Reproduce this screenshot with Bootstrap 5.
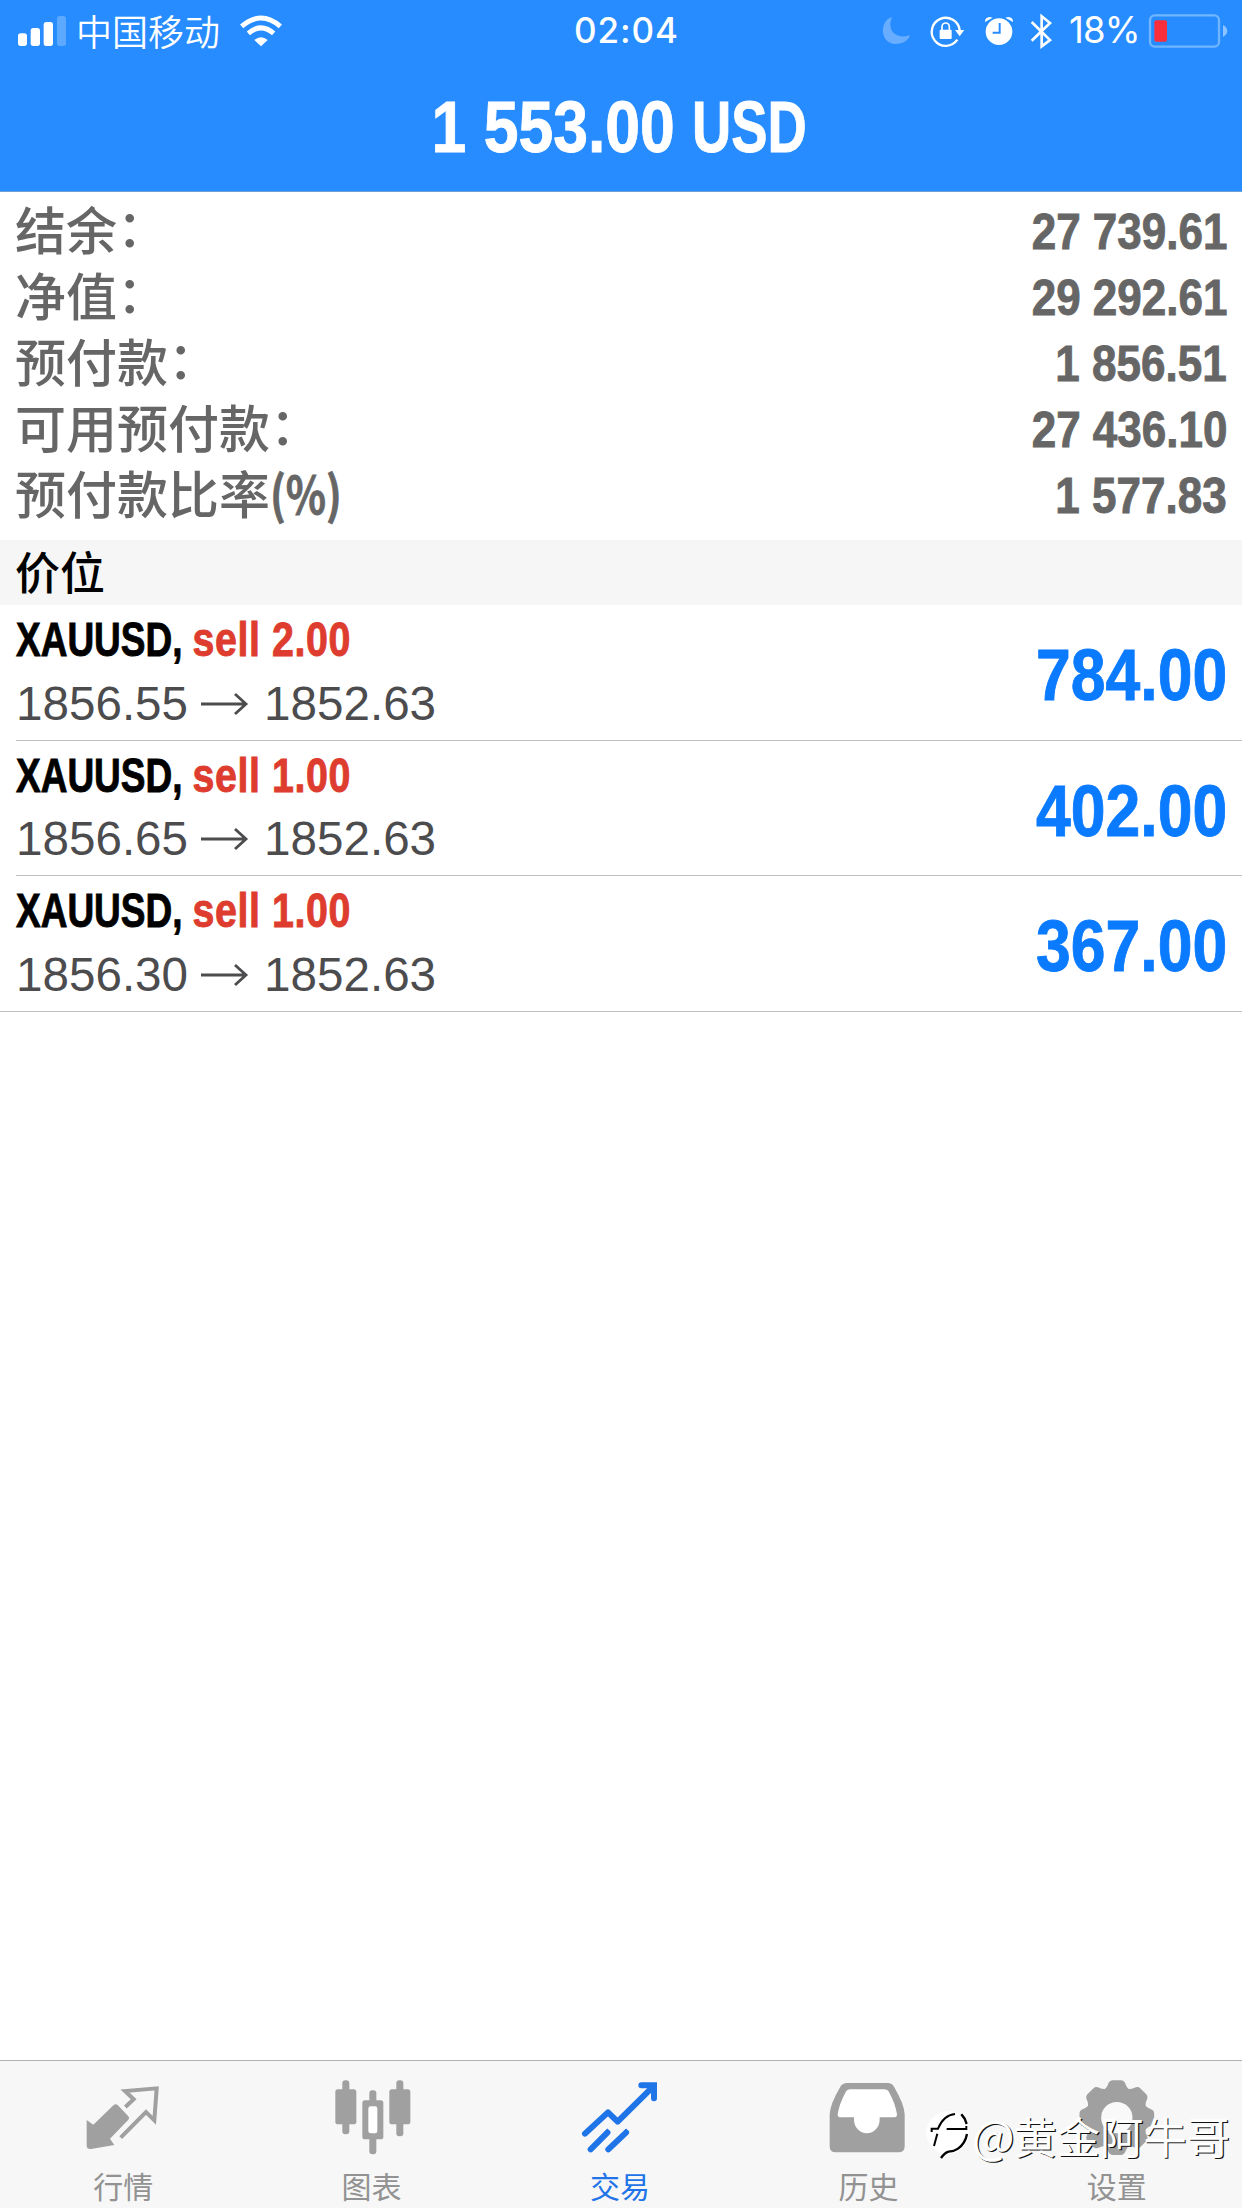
<!DOCTYPE html>
<html lang="zh-CN">
<head>
<meta charset="utf-8">
<meta name="viewport" content="width=device-width, initial-scale=1">
<title>交易</title>
<link rel="stylesheet" href="https://cdn.jsdelivr.net/npm/bootstrap@5.3.0/dist/css/bootstrap.min.css">
<style>
  body { font-family: "Liberation Sans", "Noto Sans CJK SC", sans-serif; background: #fff; }
  .screen { width: 1242px; height: 2208px; }
  svg { display: block; flex: none; }

  .topbar { height: 192px; background: #268cff; border-bottom: 1px solid #6f9fd8; }
  .status { height: 61px; padding: 0 13px 0 16px; font-size: 36px; line-height: 61px; }
  .status > div { flex: 1 1 0; }
  .carrier { font-family: "Noto Sans CJK SC", sans-serif; font-weight: 350; margin-left: 8px; width: 162px; line-height: 59px; }
  .clock { font-family: Inter, sans-serif; font-weight: 500; font-size: 35px; letter-spacing: .9px; padding-left: 8px; }
  .charge { font-family: Inter, sans-serif; font-size: 36.5px; width: 78px; margin-left: 15px; letter-spacing: -.9px; }
  .equity { font-size: 72px; line-height: 82px; padding: 25px 3px 0 0; }

  .cond { display: inline-block; font-weight: 700; white-space: pre; transform: scaleX(.868); -webkit-text-stroke: .9px currentColor; }
  .cond-end { transform-origin: 100% 50%; }
  .cond-start { transform-origin: 0 50%; transform: scaleX(.82); }
  .currency { display: inline-block; transform: scaleX(.87); transform-origin: 0 50%; margin-right: -20px; }

  .summary { padding: 3px 15px 15px 15px; color: #666; }
  .summary-line { height: 66px; line-height: 66px; }
  .summary-label { font-family: "Noto Sans CJK SC", sans-serif; font-size: 51px; font-weight: 500; }
  .colon { vertical-align: 3px; line-height: 1; }
  .percent { display: inline-block; transform: scaleX(.82); transform-origin: 0 50%; font-weight: 600; -webkit-text-stroke: .8px currentColor; }
  .summary-value { font-size: 50px; padding-top: 4px; transform: scaleX(.88); }

  .section-title { height: 65px; line-height: 62px; padding-left: 15px; background: #f6f6f6; color: #000;
    font-family: "Noto Sans CJK SC", sans-serif; font-size: 45px; font-weight: 500; }

  .deal { height: 135.5px; margin-left: 16px; padding: 4px 15px 0 0; border-bottom: 1px solid #bfbfc2; }
  .deal:last-child { margin-left: 0; padding-left: 16px; }
  .deal-title, .deal-price { height: 63px; line-height: 62px; font-size: 48px; }
  .symbol { display: inline-block; color: #000; transform: scaleX(.94); transform-origin: 0 50%; margin-right: -14px; }
  .side { color: #de3c2e; letter-spacing: .7px; }
  .deal-price { color: #4c4c4e; font-size: 47.6px; }
  .profit { color: #0a7aff; font-size: 72px; line-height: 132px; }

  .tabs { height: 148px; background: #f7f7f7; border-top: 1px solid #b2b2b2; }
  .tab { flex: 1 1 0; padding-top: 16px; color: #929292; }
  .tab.current { color: #1f74e8; }
  .tab-label { font-family: "Noto Sans CJK SC", sans-serif; font-size: 30px; line-height: 44px; margin: 6px 2px 0 0; }

  .signature { right: 12px; bottom: 45px; height: 56px; line-height: 56px; font-size: 43.3px; color: #fff;
    font-family: "Noto Sans CJK SC", sans-serif; font-weight: 400; white-space: nowrap; text-shadow: 1.2px 1px 0 #111; }
  .at-sign { font-size: 45px; margin-right: -1px; }
</style>
<script src="https://cdn.jsdelivr.net/npm/bootstrap@5.3.0/dist/js/bootstrap.bundle.min.js"></script>
</head>
<body>
<div class="screen position-relative d-flex flex-column overflow-hidden">
  <header class="topbar text-white">
    <div class="status d-flex">
      <div class="d-flex align-items-center">
        <svg width="52" height="36" viewBox="48 36 156 108" fill="#fff"><rect x="54" y="97" width="27" height="38" rx="8"/><rect x="92" y="81" width="28" height="54" rx="8"/><rect x="131" y="63" width="28" height="72" rx="8"/><rect x="171" y="45" width="27" height="90" rx="8" opacity=".25"/></svg>
        <span class="carrier">中国移动</span>
        <svg width="46" height="36" viewBox="714 36 138 108" fill="none" stroke="#fff" stroke-width="15"><path d="M725 76Q783 26 841 76M745 97Q783 64 821 97"/><path d="M763 117Q783 100 803 117L783 136Z" fill="#fff" stroke="none"/></svg>
      </div>
      <span class="clock">02:04</span>
      <div class="d-flex align-items-center justify-content-end">
        <svg width="32" height="36" viewBox="114 36 96 108"><path d="M147 48C108 60 110 128 158 129C181 129 196 118 201 103C160 116 130 90 147 48Z" fill="#68adff"/></svg>
        <svg class="ms-3" width="37" height="36" viewBox="255 36 111 108" fill="none" stroke="#fff"><path d="M340 116A42 42 0 1 1 347 88" stroke-width="7"/><path d="M333 87H361L347 106Z" fill="#fff" stroke="none"/><rect x="287" y="86" width="36" height="28" rx="3" fill="#fff" stroke="none"/><path d="M294 88V77A11 11 0 0 1 316 77V88" stroke-width="5"/></svg>
        <svg width="49" height="36" viewBox="366 36 147 108"><circle cx="465" cy="92" r="40" fill="#fff"/><path d="M423 63Q422 49 437 48L446 50ZM507 63Q508 49 493 48L484 50Z" fill="#fff"/><path d="M467 66V95H446" fill="none" stroke="#268cff" stroke-width="6"/></svg>
        <svg width="39" height="36" viewBox="513 36 117 108" fill="none" stroke="#fff" stroke-width="8"><path d="M563 63L618 117L593 136V46L618 66L563 119"/></svg>
        <span class="charge">18%</span>
        <svg width="82" height="36" viewBox="915 36 246 108"><rect x="924" y="43" width="207" height="94" rx="14" fill="none" stroke="#72b5ff" stroke-width="7"/><path d="M1143 72Q1156 80 1156 90T1143 108Z" fill="#8dc3ff"/><rect x="937" y="58" width="38" height="64" rx="6" fill="#fb2f3c"/></svg>
      </div>
    </div>
    <div class="equity text-center"><span class="cond">1 553.00 <span class="currency">USD</span></span></div>
  </header>

  <main class="flex-grow-1">
    <section class="summary">
      <div class="summary-line d-flex justify-content-between"><span class="summary-label">结余<span class="colon">：</span></span><span class="summary-value cond cond-end">27 739.61</span></div>
      <div class="summary-line d-flex justify-content-between"><span class="summary-label">净值<span class="colon">：</span></span><span class="summary-value cond cond-end">29 292.61</span></div>
      <div class="summary-line d-flex justify-content-between"><span class="summary-label">预付款<span class="colon">：</span></span><span class="summary-value cond cond-end">1 856.51</span></div>
      <div class="summary-line d-flex justify-content-between"><span class="summary-label">可用预付款<span class="colon">：</span></span><span class="summary-value cond cond-end">27 436.10</span></div>
      <div class="summary-line d-flex justify-content-between"><span class="summary-label">预付款比率<span class="percent">(%)</span></span><span class="summary-value cond cond-end">1 577.83</span></div>
    </section>
    <div class="section-title">价位</div>
    <section>
      <div class="deal d-flex justify-content-between">
        <div>
          <div class="deal-title"><span class="cond cond-start"><span class="symbol">XAUUSD,</span> <span class="side">sell 2.00</span></span></div>
          <div class="deal-price d-flex align-items-center"><span>1856.55</span><svg class="ms-2 me-2" width="60" height="24" viewBox="0 0 60 24" fill="none" stroke="currentColor" stroke-width="2.8"><path d="M5 12H50M39 2L50 12L39 22"/></svg><span>1852.63</span></div>
        </div>
        <span class="profit cond cond-end">784.00</span>
      </div>
      <div class="deal d-flex justify-content-between">
        <div>
          <div class="deal-title"><span class="cond cond-start"><span class="symbol">XAUUSD,</span> <span class="side">sell 1.00</span></span></div>
          <div class="deal-price d-flex align-items-center"><span>1856.65</span><svg class="ms-2 me-2" width="60" height="24" viewBox="0 0 60 24" fill="none" stroke="currentColor" stroke-width="2.8"><path d="M5 12H50M39 2L50 12L39 22"/></svg><span>1852.63</span></div>
        </div>
        <span class="profit cond cond-end">402.00</span>
      </div>
      <div class="deal d-flex justify-content-between">
        <div>
          <div class="deal-title"><span class="cond cond-start"><span class="symbol">XAUUSD,</span> <span class="side">sell 1.00</span></span></div>
          <div class="deal-price d-flex align-items-center"><span>1856.30</span><svg class="ms-2 me-2" width="60" height="24" viewBox="0 0 60 24" fill="none" stroke="currentColor" stroke-width="2.8"><path d="M5 12H50M39 2L50 12L39 22"/></svg><span>1852.63</span></div>
        </div>
        <span class="profit cond cond-end">367.00</span>
      </div>
    </section>
  </main>

  <nav class="tabs d-flex">
    <div class="tab d-flex flex-column align-items-center">
      <svg width="90" height="80" viewBox="238 110 270 240"><path d="M342 194Q348 189 354 194L386 228Q391 233 386 238L331 295L344 314L274 326Q261 327 261 317V239L281 253Z" fill="#a0a0a0"/><path d="M377 200L402 177L376 152L471 144L464 240L439 215L363 292" fill="none" stroke="#a0a0a0" stroke-width="12"/></svg>
      <span class="tab-label">行情</span>
    </div>
    <div class="tab d-flex flex-column align-items-center">
      <svg width="90" height="80" viewBox="983 110 270 240" fill="#a0a0a0"><rect x="1026" y="120" width="21" height="162" rx="9"/><rect x="1005" y="147" width="63" height="105" rx="8"/><rect x="1107" y="150" width="21" height="192" rx="9"/><rect x="1086" y="180" width="63" height="117" rx="8"/><rect x="1104" y="198" width="27" height="81" rx="7" fill="#fff"/><rect x="1188" y="120" width="21" height="168" rx="9"/><rect x="1167" y="147" width="63" height="105" rx="8"/></svg>
      <span class="tab-label">图表</span>
    </div>
    <div class="tab current d-flex flex-column align-items-center">
      <svg width="90" height="80" viewBox="168 110 270 240" fill="none" stroke="#1f74e8" stroke-width="18" stroke-linecap="round" stroke-linejoin="round"><path d="M195 280L264 216L293 244L400 138"/><path d="M364 135H402V174" stroke-linejoin="miter"/><path d="M212 327L262 277M265 327L318 277"/><path d="M259 268L269 278M315 268L325 278" stroke-width="9" stroke-linecap="butt"/></svg>
      <span class="tab-label">交易</span>
    </div>
    <div class="tab d-flex flex-column align-items-center">
      <svg width="90" height="80" viewBox="913 110 270 240"><path d="M982 128H1104Q1117 128 1123 139Q1154 192 1155 222V318Q1155 336 1137 336H948Q930 336 930 318V222Q931 192 962 139Q969 128 982 128Z" fill="#a0a0a0"/><path d="M992 147H1092Q1104 147 1109 157Q1127 190 1132 222Q1132 231 1125 231H1080V238A38 40 0 0 1 1003 238V231H961Q954 231 954 222Q959 190 977 157Q982 147 992 147Z" fill="#fff"/></svg>
      <span class="tab-label">历史</span>
    </div>
    <div class="tab d-flex flex-column align-items-center">
      <svg width="90" height="80" viewBox="518 110 270 240"><g transform="translate(649.5 232)" fill="#a0a0a0"><circle r="91"/><g id="teeth"><path id="tooth" d="M-44 -80Q-30 -88 -26 -101Q-22 -112 -12 -112H12Q22 -112 26 -101Q30 -88 44 -80Z"/><use href="#tooth" transform="rotate(45)"/><use href="#tooth" transform="rotate(90)"/><use href="#tooth" transform="rotate(135)"/></g><use href="#teeth" transform="rotate(180)"/><circle r="47" fill="#f9f9f9"/></g></svg>
      <span class="tab-label">设置</span>
    </div>
  </nav>

  <div class="signature position-absolute d-flex align-items-center">
    <svg width="46" height="50" viewBox="70 236 138 150" fill="none" stroke="#000" stroke-width="6"><circle cx="135" cy="304" r="64" fill="#fff" stroke="none"/><path d="M87 302V292H106Q122 252 157 248M132 293H191V284M104 307L94 344"/><path d="M176 249L186 262L192 278M193 308Q188 336 166 352Q155 360 138 361Q126 364 115 380" stroke-width="7"/></svg>
    <span><span class="at-sign">@</span>黄金阿牛哥</span>
  </div>
</div>
</body>
</html>
